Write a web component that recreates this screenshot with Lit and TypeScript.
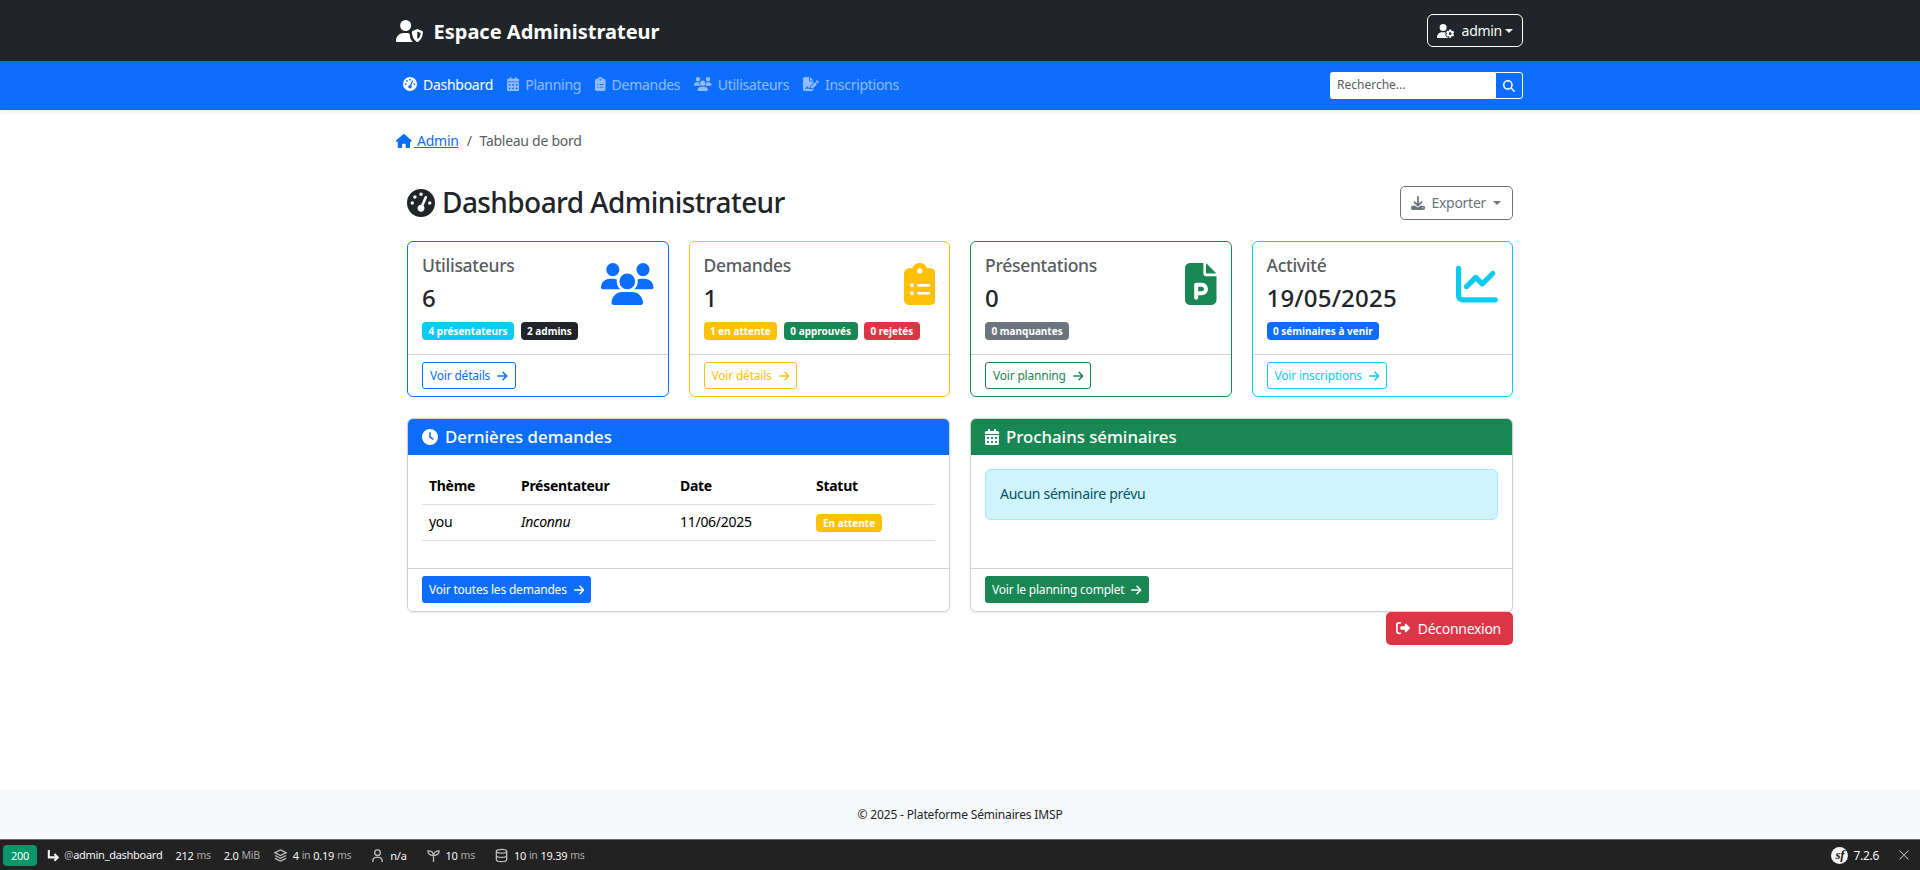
import { LitElement, html, css, svg } from 'lit';
import { customElement } from 'lit/decorators.js';

const P = {
  gauge: ['0 0 512 512', 'M0 256a256 256 0 1 1 512 0A256 256 0 1 1 0 256zM288 96a32 32 0 1 0 -64 0 32 32 0 1 0 64 0zM256 416c35.3 0 64-28.7 64-64c0-17.4-6.9-33.1-18.1-44.6L366 161.7c5.3-12.1-.2-26.3-12.3-31.6s-26.3 .2-31.6 12.3L257.9 288c-.6 0-1.3 0-1.9 0c-35.3 0-64 28.7-64 64s28.7 64 64 64zM176 144a32 32 0 1 0 -64 0 32 32 0 1 0 64 0zM96 288a32 32 0 1 0 0-64 32 32 0 1 0 0 64zm352-32a32 32 0 1 0 -64 0 32 32 0 1 0 64 0z'],
  users: ['0 0 640 512', 'M144 0a80 80 0 1 1 0 160A80 80 0 1 1 144 0zM512 0a80 80 0 1 1 0 160A80 80 0 1 1 512 0zM0 298.7C0 239.8 47.8 192 106.7 192h42.7c15.9 0 31 3.5 44.6 9.7c-1.3 7.2-1.9 14.7-1.9 22.3c0 38.2 16.8 72.5 43.3 96c-.2 0-.4 0-.7 0H21.3C9.6 320 0 310.4 0 298.7zM405.3 320c-.2 0-.4 0-.7 0c26.6-23.5 43.3-57.8 43.3-96c0-7.6-.7-15-1.9-22.3c13.6-6.3 28.7-9.7 44.6-9.7h42.7C592.2 192 640 239.8 640 298.7c0 11.8-9.6 21.3-21.3 21.3H405.3zM224 224a96 96 0 1 1 192 0 96 96 0 1 1 -192 0zM128 485.3C128 411.7 187.7 352 261.3 352H378.7C452.3 352 512 411.7 512 485.3c0 14.7-11.9 26.7-26.7 26.7H154.7c-14.7 0-26.7-11.9-26.7-26.7z'],
  clipboard: ['0 0 384 512', 'M192 0c-41.8 0-77.4 26.7-90.5 64H64C28.7 64 0 92.7 0 128V448c0 35.3 28.7 64 64 64H320c35.3 0 64-28.7 64-64V128c0-35.3-28.7-64-64-64H282.5C269.4 26.7 233.8 0 192 0zm0 64a32 32 0 1 1 0 64 32 32 0 1 1 0-64zM72 272a24 24 0 1 1 48 0 24 24 0 1 1 -48 0zm104-16H304c8.8 0 16 7.2 16 16s-7.2 16-16 16H176c-8.8 0-16-7.2-16-16s7.2-16 16-16zM72 368a24 24 0 1 1 48 0 24 24 0 1 1 -48 0zm88 0c0-8.8 7.2-16 16-16H304c8.8 0 16 7.2 16 16s-7.2 16-16 16H176c-8.8 0-16-7.2-16-16z'],
  ppt: ['0 0 384 512', 'M64 0C28.7 0 0 28.7 0 64V448c0 35.3 28.7 64 64 64H320c35.3 0 64-28.7 64-64V160H256c-17.7 0-32-14.3-32-32V0H64zM256 0V128H384L256 0zM136 240h68c42 0 76 34 76 76s-34 76-76 76H160v32c0 13.3-10.7 24-24 24s-24-10.7-24-24V368 264c0-13.3 10.7-24 24-24zm68 104c15.5 0 28-12.5 28-28s-12.5-28-28-28H160v56h44z'],
  chart: ['0 0 512 512', 'M64 64c0-17.7-14.3-32-32-32S0 46.3 0 64V400c0 44.2 35.8 80 80 80H480c17.7 0 32-14.3 32-32s-14.3-32-32-32H80c-8.8 0-16-7.2-16-16V64zm406.6 86.6c12.5-12.5 12.5-32.8 0-45.3s-32.8-12.5-45.3 0L320 210.7l-57.4-57.4c-12.5-12.5-32.8-12.5-45.3 0l-112 112c-12.5 12.5-12.5 32.8 0 45.3s32.8 12.5 45.3 0L240 221.3l57.4 57.4c12.5 12.5 32.8 12.5 45.3 0l128-128z'],
  clock: ['0 0 512 512', 'M256 0a256 256 0 1 1 0 512A256 256 0 1 1 256 0zM232 120V256c0 8 4 15.5 10.7 20l96 64c11 7.4 25.9 4.4 33.3-6.7s4.4-25.9-6.7-33.3L280 243.2V120c0-13.3-10.7-24-24-24s-24 10.7-24 24z'],
  calendar: ['0 0 448 512', 'M128 0c17.7 0 32 14.3 32 32V64H288V32c0-17.7 14.3-32 32-32s32 14.3 32 32V64h48c26.5 0 48 21.5 48 48v48H0V112C0 85.5 21.5 64 48 64H96V32c0-17.7 14.3-32 32-32zM0 192H448V464c0 26.5-21.5 48-48 48H48c-26.5 0-48-21.5-48-48V192zm64 80v32c0 8.8 7.2 16 16 16h32c8.8 0 16-7.2 16-16V272c0-8.8-7.2-16-16-16H80c-8.8 0-16 7.2-16 16zm128 0v32c0 8.8 7.2 16 16 16h32c8.8 0 16-7.2 16-16V272c0-8.8-7.2-16-16-16H208c-8.8 0-16 7.2-16 16zm144-16c-8.8 0-16 7.2-16 16v32c0 8.8 7.2 16 16 16h32c8.8 0 16-7.2 16-16V272c0-8.8-7.2-16-16-16H336zM64 400v32c0 8.8 7.2 16 16 16h32c8.8 0 16-7.2 16-16V400c0-8.8-7.2-16-16-16H80c-8.8 0-16 7.2-16 16zm144-16c-8.8 0-16 7.2-16 16v32c0 8.8 7.2 16 16 16h32c8.8 0 16-7.2 16-16V400c0-8.8-7.2-16-16-16H208c-8.8 0-16 7.2-16 16zm112 16v32c0 8.8 7.2 16 16 16h32c8.8 0 16-7.2 16-16V400c0-8.8-7.2-16-16-16H336c-8.8 0-16 7.2-16 16z'],
  home: ['0 0 576 512', 'M575.8 255.5c0 18-15 32.1-32 32.1h-32l.7 160.2c0 2.7-.2 5.4-.5 8.1V472c0 22.1-17.9 40-40 40H456c-1.1 0-2.2 0-3.3-.1c-1.4 .1-2.8 .1-4.2 .1H416 392c-22.1 0-40-17.9-40-40V448 384c0-17.7-14.3-32-32-32H256c-17.7 0-32 14.3-32 32v64 24c0 22.1-17.9 40-40 40H160 128.1c-1.5 0-3-.1-4.5-.2c-1.2 .1-2.4 .2-3.6 .2H104c-22.1 0-40-17.9-40-40V360c0-.9 0-1.9 .1-2.8V287.6H32c-18 0-32-14-32-32.1c0-9 3-17 10-24L266.4 8c7-7 15-8 22-8s15 2 21 7L564.8 231.5c8 7 12 15 11 24z'],
  arrow: ['0 0 448 512', 'M438.6 278.6c12.5-12.5 12.5-32.8 0-45.3l-160-160c-12.5-12.5-32.8-12.5-45.3 0s-12.5 32.8 0 45.3L338.8 224 32 224c-17.7 0-32 14.3-32 32s14.3 32 32 32l306.7 0L233.4 393.4c-12.5 12.5-12.5 32.8 0 45.3s32.8 12.5 45.3 0l160-160z'],
  search: ['0 0 512 512', 'M416 208c0 45.9-14.9 88.3-40 122.7L502.6 457.4c12.5 12.5 12.5 32.8 0 45.3s-32.8 12.5-45.3 0L330.7 376c-34.4 25.2-76.8 40-122.7 40C93.1 416 0 322.9 0 208S93.1 0 208 0S416 93.1 416 208zM208 352a144 144 0 1 0 0-288 144 144 0 1 0 0 288z'],
  download: ['0 0 512 512', 'M288 32c0-17.7-14.3-32-32-32s-32 14.3-32 32V274.7l-73.4-73.4c-12.5-12.5-32.8-12.5-45.3 0s-12.5 32.8 0 45.3l128 128c12.5 12.5 32.8 12.5 45.3 0l128-128c12.5-12.5 12.5-32.8 0-45.3s-32.8-12.5-45.3 0L288 274.7V32zM64 352c-35.3 0-64 28.7-64 64v32c0 35.3 28.7 64 64 64H448c35.3 0 64-28.7 64-64V416c0-35.3-28.7-64-64-64H346.5l-45.3 45.3c-25 25-65.5 25-90.5 0L165.5 352H64zm368 56a24 24 0 1 1 0 48 24 24 0 1 1 0-48z'],
  logout: ['0 0 512 512', 'M377.9 105.9L500.7 228.7c7.2 7.2 11.3 17.1 11.3 27.3s-4.1 20.1-11.3 27.3L377.9 406.1c-6.4 6.4-15 9.9-24 9.9c-18.7 0-33.9-15.2-33.9-33.9l0-62.1-128 0c-17.7 0-32-14.3-32-32l0-64c0-17.7 14.3-32 32-32l128 0 0-62.1c0-18.7 15.2-33.9 33.9-33.9c9 0 17.6 3.6 24 9.9zM160 96L96 96c-17.7 0-32 14.3-32 32l0 256c0 17.7 14.3 32 32 32l64 0c17.7 0 32 14.3 32 32s-14.3 32-32 32l-64 0c-53 0-96-43-96-96L0 128C0 75 43 32 96 32l64 0c17.7 0 32 14.3 32 32s-14.3 32-32 32z'],
  userShield: ['0 0 640 512', 'M224 256A128 128 0 1 0 224 0a128 128 0 1 0 0 256zm-45.7 48C79.8 304 0 383.8 0 482.3C0 498.7 13.3 512 29.7 512H392.6C345 470 318 400 320 330c-16-17-30-26-50.300-26H178.300zM496 208l114 46c10 4 16 12 16 22c0 94-40 194-116 234c-8 4-16 4-24 0c-76-40-116-140-116-234c0-10 6-18 16-22zM496 270V448c48-28 73-78 78-148z'],
  userCog: ['0 0 640 512', 'M224 0a128 128 0 1 1 0 256A128 128 0 1 1 224 0zM178.3 304h91.4c11.8 0 23.4 1.2 34.5 3.3c-2.1 18.5 7.4 35.6 21.8 44.8c-16.6 10.6-26.7 31.6-20 53.3c4 12.9 9.4 25.5 16.4 37.6s15.2 23.1 24.4 33c15.7 16.9 39.6 18.4 57.2 8.7v.9c0 9.2 2.7 18.5 7.9 26.3H29.7C13.3 512 0 498.7 0 482.3C0 383.8 79.8 304 178.3 304zM436 218.2c0-7 4.5-13.3 11.3-14.8c10.5-2.4 21.5-3.7 32.7-3.7s22.2 1.3 32.7 3.7c6.8 1.5 11.3 7.8 11.3 14.8v30.6c7.9 3.4 15.4 7.7 22.3 12.8l24.9-14.3c6.1-3.5 13.7-2.7 18.5 2.4c7.6 8.1 14.3 17.2 20.1 27.2s10.3 20.4 13.5 31c2.1 6.7-1.1 13.7-7.2 17.2l-25 14.4c.4 4 .7 8.1 .7 12.3s-.2 8.2-.7 12.3l25 14.4c6.1 3.5 9.2 10.5 7.2 17.2c-3.3 10.6-7.8 21-13.5 31s-12.5 19.1-20.1 27.2c-4.8 5.1-12.5 5.9-18.5 2.4l-24.9-14.3c-6.9 5.1-14.3 9.4-22.3 12.8l0 30.6c0 7-4.5 13.3-11.3 14.8c-10.5 2.4-21.5 3.7-32.7 3.7s-22.2-1.3-32.7-3.7c-6.8-1.5-11.3-7.8-11.3-14.8V454.800c-8-3.4-15.6-7.7-22.5-12.9l-24.7 14.3c-6.1 3.5-13.7 2.7-18.5-2.4c-7.6-8.1-14.3-17.2-20.1-27.2s-10.3-20.4-13.5-31c-2.1-6.7 1.100-13.7 7.200-17.2l24.800-14.3c-.4-4.100-.7-8.200-.7-12.400s.2-8.300 .7-12.400L343.800 325c-6.100-3.500-9.200-10.500-7.200-17.200c3.300-10.600 7.700-21 13.500-31s12.500-19.100 20.100-27.200c4.800-5.100 12.400-5.900 18.500-2.400l24.800 14.300c6.900-5.100 14.500-9.300 22.500-12.700V218.200zm92.100 133.500a48.100 48.100 0 1 0 -96.100 0 48.100 48.100 0 1 0 96.100 0z'],
  fileSign: ['0 0 576 512', 'M64 0C28.7 0 0 28.7 0 64V448c0 35.3 28.7 64 64 64H320c35.3 0 64-28.7 64-64V428.7c-2.7 1.1-5.4 2-8.2 2.700l-60.100 15c-3 .7-6 1.200-9 1.400c-.9 .1-1.800 .2-2.700 .2H240c-6.100 0-11.600-3.400-14.300-8.800l-8.800-17.700c-1.700-3.400-5.100-5.500-8.800-5.500s-7.200 2.100-8.800 5.500l-8.800 17.700c-2.900 5.900-9.200 9.400-15.700 8.800s-12.100-5.100-13.900-11.300L144 381l-9.800 32.800c-6.100 20.300-24.800 34.200-46 34.200H80c-8.800 0-16-7.200-16-16s7.200-16 16-16h8.200c7.100 0 13.300-4.600 15.300-11.400l14.900-49.500c3.400-11.300 13.800-19.100 25.600-19.100s22.200 7.800 25.600 19.100l11.600 38.600c7.400-6.200 16.800-9.700 26.800-9.700c15.900 0 30.400 9 37.500 23.200l4.400 8.800h8.900c-3.100-8.800-3.700-18.400-1.400-27.800l15-60.100c2.800-11.300 8.600-21.500 16.800-29.700L384 203.600V160H256c-17.700 0-32-14.300-32-32V0H64zM256 0V128H384L256 0zM549.800 139.700c-15.600-15.600-40.900-15.600-56.600 0l-29.400 29.400 71 71 29.400-29.400c15.600-15.600 15.600-40.900 0-56.600l-14.400-14.400zM311.900 321c-4.100 4.100-7 9.200-8.400 14.900l-15 60.100c-1.400 5.500 .2 11.200 4.200 15.200s9.700 5.600 15.200 4.200l60.100-15c5.600-1.400 10.800-4.300 14.900-8.400L512.100 262.700l-71-71L311.900 321z'],
} as const;

type IconName = keyof typeof P;

const icon = (name: IconName) => html`<svg class="fa" viewBox=${P[name][0]} aria-hidden="true">${svg`<path fill="currentColor" fill-rule="evenodd" d=${P[name][1]}></path>`}</svg>`;

type Stat = {
  tone: string;
  title: string;
  value: string;
  icon: IconName;
  badges: [string, string][];
  link: string;
};

const STATS: Stat[] = [
  { tone: 'primary', title: 'Utilisateurs', value: '6', icon: 'users', badges: [['info', '4 présentateurs'], ['dark', '2 admins']], link: 'Voir détails' },
  { tone: 'warning', title: 'Demandes', value: '1', icon: 'clipboard', badges: [['warning', '1 en attente'], ['success', '0 approuvés'], ['danger', '0 rejetés']], link: 'Voir détails' },
  { tone: 'success', title: 'Présentations', value: '0', icon: 'ppt', badges: [['secondary', '0 manquantes']], link: 'Voir planning' },
  { tone: 'info', title: 'Activité', value: '19/05/2025', icon: 'chart', badges: [['primary', '0 séminaires à venir']], link: 'Voir inscriptions' },
];

const NAV: [IconName, string][] = [
  ['gauge', 'Dashboard'],
  ['calendar', 'Planning'],
  ['clipboard', 'Demandes'],
  ['users', 'Utilisateurs'],
  ['fileSign', 'Inscriptions'],
];

@customElement('app-root')
export class AppRoot extends LitElement {
  static styles = css`
    :host {
      display: flex;
      flex-direction: column;
      min-height: 870px;
      font-family: 'Noto Sans', sans-serif;
      font-size: 14px;
      line-height: 21px;
      letter-spacing: -0.28px;
      color: #212529;
      background: #fff;
    }

    * {
      box-sizing: border-box;
    }

    .fa {
      display: inline-block;
      height: 1em;
      width: auto;
      flex: none;
    }

    .primary { --tone: #0d6efd; }
    .warning { --tone: #ffc107; }
    .success { --tone: #198754; }
    .info { --tone: #0dcaf0; }
    .danger { --tone: #dc3545; }
    .dark { --tone: #212529; }
    .secondary { --tone: #6c757d; }

    .wrap {
      width: 1128px;
      margin: 0 auto;
      display: flex;
      align-items: center;
      justify-content: space-between;
    }

    .topbar {
      background: #212529;
      height: 61px;
      display: flex;
      align-items: center;
      color: #fff;
    }

    .brand {
      display: flex;
      align-items: center;
      gap: 10px;
      font-size: 20px;
      font-weight: 700;
      letter-spacing: 0;
      padding-top: 2px;
    }

    .brand .fa {
      font-size: 22px;
      margin-top: -2px;
    }

    .user-btn {
      display: flex;
      align-items: center;
      height: 33px;
      padding: 0 9px;
      border: 1px solid #fff;
      border-radius: 6px;
      color: #f8f9fa;
      margin-right: 1px;
    }

    .user-btn .fa {
      margin-right: 7px;
    }

    .user-btn .caret {
      margin-left: 3px;
    }

    .caret {
      width: 0;
      height: 0;
      border-top: 4px solid currentColor;
      border-left: 4px solid transparent;
      border-right: 4px solid transparent;
    }

    .navbar {
      background: #0d6efd;
      height: 49px;
      display: flex;
      align-items: center;
      box-shadow: 0 2px 4px rgba(0, 0, 0, 0.08);
    }

    .nav {
      display: flex;
      gap: 14px;
      padding-left: 7px;
      padding-bottom: 3px;
    }

    .nav a {
      display: flex;
      align-items: center;
      gap: 6px;
      color: rgba(255, 255, 255, 0.55);
    }

    .nav a.active {
      color: #fff;
    }

    .search {
      display: flex;
      width: 193px;
      height: 27px;
      margin-right: 1px;
      font-size: 12px;
      letter-spacing: 0;
    }

    .search span {
      flex: 1;
      background: #fff;
      color: #595c5f;
      border-radius: 3px 0 0 3px;
      padding: 0 7px;
      line-height: 26px;
    }

    .search b {
      width: 28px;
      display: flex;
      align-items: center;
      justify-content: center;
      color: #fff;
      border: 1px solid #fff;
      border-radius: 0 3px 3px 0;
    }

    main {
      flex: 1;
      width: 1128px;
      margin: 0 auto;
    }

    .crumb {
      display: flex;
      align-items: center;
      gap: 8px;
      margin-top: 20px;
      height: 21px;
      color: #595c5f;
    }

    .crumb a {
      color: #0d6efd;
      text-decoration: underline;
      white-space: pre;
    }

    .crumb a .fa {
      vertical-align: -2px;
      margin-right: 2px;
    }

    .content {
      padding: 0 11px;
    }

    .head {
      display: flex;
      align-items: center;
      justify-content: space-between;
      margin-top: 30px;
      height: 42px;
    }

    h1 {
      margin: 0;
      padding-top: 1px;
      font-size: 28px;
      font-weight: 500;
      letter-spacing: -0.58px;
      display: flex;
      align-items: center;
      gap: 7px;
    }

    .export {
      display: flex;
      align-items: center;
      gap: 6px;
      height: 34px;
      padding: 0 11px 0 10px;
      margin-top: 1px;
      border: 1px solid #6c757d;
      border-radius: 5px;
      color: #6c757d;
    }

    .export .caret {
      margin-left: 1px;
    }

    .stats {
      display: grid;
      grid-template-columns: repeat(4, minmax(0, 1fr));
      gap: 20px;
      margin-top: 18px;
    }

    .stat {
      border: 1px solid var(--tone);
      border-radius: 6px;
      height: 156px;
      display: flex;
      flex-direction: column;
    }

    .stat-body {
      flex: 1;
      padding: 13px 14px 14px;
    }

    .stat-top {
      display: flex;
      justify-content: space-between;
    }

    .stat h2 {
      margin: 0;
      font-size: 17.5px;
      line-height: 20px;
      font-weight: 500;
      color: #595c5f;
    }

    .stat .value {
      font-size: 24px;
      line-height: 29px;
      font-weight: 500;
      letter-spacing: 0.2px;
      margin-top: 8px;
    }

    .badges {
      display: flex;
      gap: 6.5px;
      margin-top: 10px;
    }

    .badge {
      display: inline-block;
      background: var(--tone);
      color: #fff;
      font-size: 10px;
      line-height: 18px;
      font-weight: 700;
      letter-spacing: 0;
      padding: 0 6.5px;
      border-radius: 4px;
      white-space: nowrap;
    }

    .stat-icon {
      color: var(--tone);
      font-size: 42px;
      line-height: 1;
      margin-top: 8px;
      display: flex;
    }

    .stat-foot {
      border-top: 1px solid rgba(0, 0, 0, 0.175);
      height: 42px;
      padding: 7px 14px 0;
    }

    .btn {
      display: inline-flex;
      align-items: center;
      gap: 7px;
      height: 27px;
      padding: 0 7px;
      font-size: 12px;
      letter-spacing: -0.2px;
      border-radius: 3px;
    }

    .btn .fa {
      font-size: 12px;
    }

    .btn.outline {
      border: 1px solid var(--tone);
      color: var(--tone);
    }

    .btn.solid {
      background: var(--tone);
      color: #fff;
    }

    .panels {
      display: grid;
      grid-template-columns: repeat(2, minmax(0, 1fr));
      gap: 20px;
      margin-top: 21px;
    }

    .panel {
      height: 194px;
      border: 1px solid rgba(0, 0, 0, 0.175);
      border-radius: 6px;
      box-shadow: 0 1px 2px rgba(0, 0, 0, 0.075);
      display: flex;
      flex-direction: column;
      overflow: hidden;
    }

    .panel-head {
      background: var(--tone);
      color: #fff;
      height: 36px;
      padding: 0 14px 1px;
      display: flex;
      align-items: center;
      gap: 7px;
      font-size: 16.8px;
      font-weight: 500;
      letter-spacing: 0;
    }

    .panel-head .fa {
      font-size: 16px;
    }

    .panel-body {
      flex: 1;
      padding: 14px;
    }

    .panel-foot {
      border-top: 1px solid rgba(0, 0, 0, 0.175);
      height: 43px;
      padding: 7px 14px 0;
    }

    table {
      width: 100%;
      table-layout: fixed;
      border-collapse: collapse;
      color: #000;
    }

    th, td {
      text-align: left;
      padding: 0 7px 1px;
      height: 36px;
      border-bottom: 1px solid #dee2e6;
      font-size: 14px;
    }

    th {
      font-weight: 700;
      height: 35px;
      padding-bottom: 2px;
    }

    td .badge {
      vertical-align: middle;
      padding: 0 7px;
    }

    .alert {
      height: 51px;
      padding: 0 14px 2px;
      background: #cff4fc;
      border: 1px solid #9eeaf9;
      border-radius: 6px;
      color: #055160;
      display: flex;
      align-items: center;
    }

    .logout-row {
      display: flex;
      justify-content: flex-end;
    }

    .logout {
      display: flex;
      align-items: center;
      gap: 8px;
      height: 33px;
      padding: 0 12px 1px 10px;
      background: #dc3545;
      color: #fff;
      border-radius: 5px;
    }

    footer {
      background: #f8f9fa;
      height: 49px;
      display: flex;
      align-items: center;
      justify-content: center;
      font-size: 12px;
      letter-spacing: -0.15px;
    }

    .sf {
      height: 31px;
      background: #222;
      border-top: 1px solid #6b6b6b;
      color: #f5f5f5;
      display: flex;
      align-items: center;
      justify-content: space-between;
      font-size: 11px;
      padding: 0 8px 0 3px;
    }

    .sf-left, .sf-right {
      display: flex;
      align-items: center;
    }

    .sf-code {
      background: #059669;
      color: #fff;
      height: 21px;
      width: 34px;
      border-radius: 4px;
      display: flex;
      align-items: center;
      justify-content: center;
    }

    .sf-item {
      display: flex;
      align-items: center;
      gap: 3px;
      white-space: nowrap;
    }

    .sf-item small {
      font-size: 10.5px;
      color: #aaa;
    }

    .sf-item svg {
      width: 15px;
      height: 15px;
      margin-right: 2px;
      flex: none;
      fill: none;
      stroke: #bbb;
      stroke-width: 1.4;
    }

    .sf-item svg.route {
      stroke: #f5f5f5;
      stroke-width: 2.2;
      margin-right: 0;
    }

    .sf-item svg.close {
      width: 12px;
      height: 12px;
    }

    .gap-s { margin-left: 9px; }
    .gap-m { margin-left: 13px; }
    .gap-l { margin-left: 19px; }

    .sf-logo {
      width: 17px;
      height: 17px;
      border-radius: 50%;
      background: #f5f5f5;
      color: #222;
      font-family: 'Liberation Serif', serif;
      font-style: italic;
      font-weight: 700;
      font-size: 13px;
      line-height: 16px;
      text-align: center;
    }

    .sf-version {
      margin-left: 5px;
      font-size: 12px;
    }

    .sf-close {
      margin-left: 19px;
    }
  `;

  private renderStat(s: Stat) {
    return html`
      <div class="stat ${s.tone}">
        <div class="stat-body">
          <div class="stat-top">
            <div>
              <h2>${s.title}</h2>
              <div class="value">${s.value}</div>
            </div>
            <div class="stat-icon">${icon(s.icon)}</div>
          </div>
          <div class="badges">
            ${s.badges.map(([tone, label]) => html`<span class="badge ${tone}">${label}</span>`)}
          </div>
        </div>
        <div class="stat-foot">
          <span class="btn outline">${s.link} ${icon('arrow')}</span>
        </div>
      </div>
    `;
  }

  render() {
    return html`
      <header class="topbar">
        <div class="wrap">
          <div class="brand">${icon('userShield')} Espace Administrateur</div>
          <div class="user-btn">${icon('userCog')} admin <span class="caret"></span></div>
        </div>
      </header>
      <nav class="navbar">
        <div class="wrap">
          <div class="nav">
            ${NAV.map(
              ([name, label], i) => html`<a class="${i === 0 ? 'active' : ''}">${icon(name)} ${label}</a>`
            )}
          </div>
          <div class="search">
            <span>Recherche...</span>
            <b>${icon('search')}</b>
          </div>
        </div>
      </nav>
      <main>
        <div class="crumb">
          <a>${icon('home')} Admin</a>
          <span>/</span>
          <span>Tableau de bord</span>
        </div>
        <div class="content">
          <div class="head">
            <h1>${icon('gauge')} Dashboard Administrateur</h1>
            <div class="export">${icon('download')} Exporter <span class="caret"></span></div>
          </div>
          <div class="stats">${STATS.map((s) => this.renderStat(s))}</div>
          <div class="panels">
            <section class="panel primary">
              <div class="panel-head">${icon('clock')} Dernières demandes</div>
              <div class="panel-body">
                <table>
                  <colgroup>
                    <col style="width: 92px" />
                    <col style="width: 159px" />
                    <col style="width: 136px" />
                    <col />
                  </colgroup>
                  <thead>
                    <tr><th>Thème</th><th>Présentateur</th><th>Date</th><th>Statut</th></tr>
                  </thead>
                  <tbody>
                    <tr>
                      <td>you</td>
                      <td><em>Inconnu</em></td>
                      <td>11/06/2025</td>
                      <td><span class="badge warning">En attente</span></td>
                    </tr>
                  </tbody>
                </table>
              </div>
              <div class="panel-foot">
                <span class="btn solid">Voir toutes les demandes ${icon('arrow')}</span>
              </div>
            </section>
            <section class="panel success">
              <div class="panel-head">${icon('calendar')} Prochains séminaires</div>
              <div class="panel-body">
                <div class="alert">Aucun séminaire prévu</div>
              </div>
              <div class="panel-foot">
                <span class="btn solid">Voir le planning complet ${icon('arrow')}</span>
              </div>
            </section>
          </div>
          <div class="logout-row">
            <div class="logout">${icon('logout')} Déconnexion</div>
          </div>
        </div>
      </main>
      <footer>© 2025 - Plateforme Séminaires IMSP</footer>
      <div class="sf">
        <div class="sf-left">
          <span class="sf-code">200</span>
          <span class="sf-item gap-s">
            <svg class="route" viewBox="0 0 16 16"><path d="M3 2v8h9M9 6.500l3.500 3.500-3.500 3.500"></path></svg>
            <span><small>@</small>admin_dashboard</span>
          </span>
          <span class="sf-item gap-m">212 <small>ms</small></span>
          <span class="sf-item gap-m">2.0 <small>MiB</small></span>
          <span class="sf-item gap-m">
            <svg viewBox="0 0 16 16"><path d="M8 2l6 3-6 3-6-3zM2 8l6 3 6-3M2 11l6 3 6-3"></path></svg>
            4 <small>in</small> 0.19 <small>ms</small>
          </span>
          <span class="sf-item gap-l">
            <svg viewBox="0 0 16 16"><circle cx="8" cy="5" r="3"></circle><path d="M3 15v-2a4 4 0 0 1 4-3h2a4 4 0 0 1 4 3v2"></path></svg>
            n/a
          </span>
          <span class="sf-item gap-l">
            <svg viewBox="0 0 16 16"><path d="M8 15V8M8 8C4 8 2 6 2 3c3 0 6 1 6 5zM8 8c0-3 3-5 6-5 0 3-2 5-6 5z"></path></svg>
            10 <small>ms</small>
          </span>
          <span class="sf-item gap-l">
            <svg viewBox="0 0 16 16"><ellipse cx="8" cy="3.500" rx="5.500" ry="2"></ellipse><path d="M2.500 3.500v9c0 1 2.500 2 5.500 2s5.500-1 5.500-2v-9M2.500 8c0 1 2.500 2 5.500 2s5.500-1 5.500-2"></path></svg>
            10 <small>in</small> 19.39 <small>ms</small>
          </span>
        </div>
        <div class="sf-right">
          <span class="sf-logo">sf</span>
          <span class="sf-item sf-version">7.2.6</span>
          <span class="sf-item sf-close">
            <svg class="close" viewBox="0 0 16 16"><path d="M2 2l12 12M14 2L2 14"></path></svg>
          </span>
        </div>
      </div>
    `;
  }
}
